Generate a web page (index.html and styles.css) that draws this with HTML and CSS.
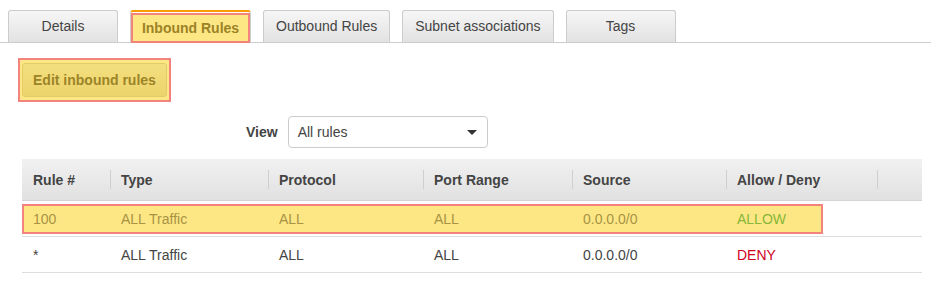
FILE: index.html
```html
<!DOCTYPE html>
<html lang="en">
<head>
<meta charset="UTF-8" />
<meta name="viewport" content="width=device-width, initial-scale=1" />
<title>Network ACL - Inbound Rules</title>
<link rel="stylesheet" href="styles.css">
</head>
<body>

<div class="tabs">
  <div class="tab">Details</div>
  <div class="tab active"><span class="mark">Inbound Rules</span></div>
  <div class="tab">Outbound Rules</div>
  <div class="tab">Subnet associations</div>
  <div class="tab">Tags</div>
</div>

<div class="toolbar">
  <div class="mark-box">
    <button type="button" class="btn">Edit inbound rules</button>
  </div>
</div>

<div class="filter">
  <label class="filter-label">View</label>
  <div class="select">
    <span>All rules</span>
    <span class="caret"></span>
  </div>
</div>

<div class="rules">
  <!-- resaltado de la fila 100 -->
  <div class="row-mark"></div>
  <table class="rules-table">
    <colgroup>
      <col style="width: 88px">
      <col style="width: 158px">
      <col style="width: 155px">
      <col style="width: 149px">
      <col style="width: 154px">
      <col style="width: 151px">
      <col style="width: 45px">
    </colgroup>
    <thead>
      <tr>
        <th>Rule #</th>
        <th>Type</th>
        <th>Protocol</th>
        <th>Port Range</th>
        <th>Source</th>
        <th>Allow / Deny</th>
        <th></th>
      </tr>
    </thead>
    <tbody>
      <tr class="marked">
        <td>100</td>
        <td>ALL Traffic</td>
        <td>ALL</td>
        <td>ALL</td>
        <td>0.0.0.0/0</td>
        <td class="allow">ALLOW</td>
        <td></td>
      </tr>
      <tr>
        <td>*</td>
        <td>ALL Traffic</td>
        <td>ALL</td>
        <td>ALL</td>
        <td>0.0.0.0/0</td>
        <td class="deny">DENY</td>
        <td></td>
      </tr>
    </tbody>
  </table>
</div>

</body>
</html>
```

FILE: styles.css
```css
body { margin: 0; font-family: "Liberation Sans", Arial, sans-serif; font-size: 14px; color: #444; background: #fff; }

/* Pestañas */
.tabs {
  display: flex;
  gap: 12px;
  padding: 10px 0 0 8px;
  border-bottom: 1px solid #ccc;
}
.tab {
  box-sizing: border-box;
  height: 32px;
  min-width: 110px;
  padding: 0 12px 1px;
  display: flex;
  align-items: center;
  justify-content: center;
  border: 1px solid #ccc;
  border-bottom: 0;
  border-radius: 3px 3px 0 0;
  background: linear-gradient(#f6f6f6, #e2e2e2);
  color: #444;
}
.tab.active {
  height: 33px;
  margin-bottom: -1px;
  padding: 1px 0 0 0;
  border-top: 2px solid #f90;
  background: #fff;
  align-items: stretch;
  min-width: 121px;
}
.mark {
  flex: 1;
  display: flex;
  align-items: center;
  justify-content: center;
  padding-bottom: 1px;
  border: 2px solid #f3837c;
  background: #fde784;
  color: #9c8226;
  font-weight: bold;
}

/* Botón editar */
.toolbar { margin: 15px 0 0 18px; display: flex; }
.mark-box {
  padding: 3px 2px;
  border: 2px solid #f3837c;
  background: #fde784;
}
.btn {
  height: 34px;
  padding: 0 10px;
  border: 1px solid #e2cb68;
  border-radius: 3px;
  background: linear-gradient(#f4df7e, #ecd46c);
  font-family: inherit;
  font-size: 14px;
  font-weight: bold;
  color: #9c8428;
  cursor: pointer;
}

/* Filtro */
.filter {
  margin: 14px 0 0 246px;
  display: flex;
  align-items: center;
  gap: 10px;
}
.filter-label { font-weight: bold; color: #444; }
.select {
  box-sizing: border-box;
  width: 200px;
  height: 32px;
  padding: 0 10px 0 9px;
  border: 1px solid #ccc;
  border-radius: 4px;
  display: flex;
  align-items: center;
  justify-content: space-between;
  color: #444;
}
.caret {
  width: 0;
  height: 0;
  border-left: 5px solid transparent;
  border-right: 5px solid transparent;
  border-top: 5px solid #333;
}

/* Tabla */
.rules { position: relative; margin: 11px 0 0 22px; width: 900px; }
.rules-table {
  position: relative;
  width: 900px;
  table-layout: fixed;
  border-collapse: collapse;
}
.rules-table th {
  position: relative;
  height: 41px;
  padding: 0 11px;
  text-align: left;
  font-weight: bold;
  color: #444;
  background: linear-gradient(#f1f1f1, #e1e1e1);
  border-bottom: 1px solid #d4d4d4;
}
.rules-table th + th::before {
  content: "";
  position: absolute;
  left: 0;
  top: 11px;
  bottom: 11px;
  width: 1px;
  background: #cfcfcf;
}
.rules-table td {
  height: 35px;
  padding: 0 11px;
  border-bottom: 1px solid #ddd;
  white-space: nowrap;
}
.rules-table tr.marked td { color: #a89345; }
.rules-table tr.marked td.allow { color: #86b738; }
.deny { color: #d0021b; }

.row-mark {
  position: absolute;
  left: 0;
  top: 45px;
  width: 801px;
  height: 30px;
  box-sizing: border-box;
  border: 2px solid #f3837c;
  background: #fde784;
}
```
